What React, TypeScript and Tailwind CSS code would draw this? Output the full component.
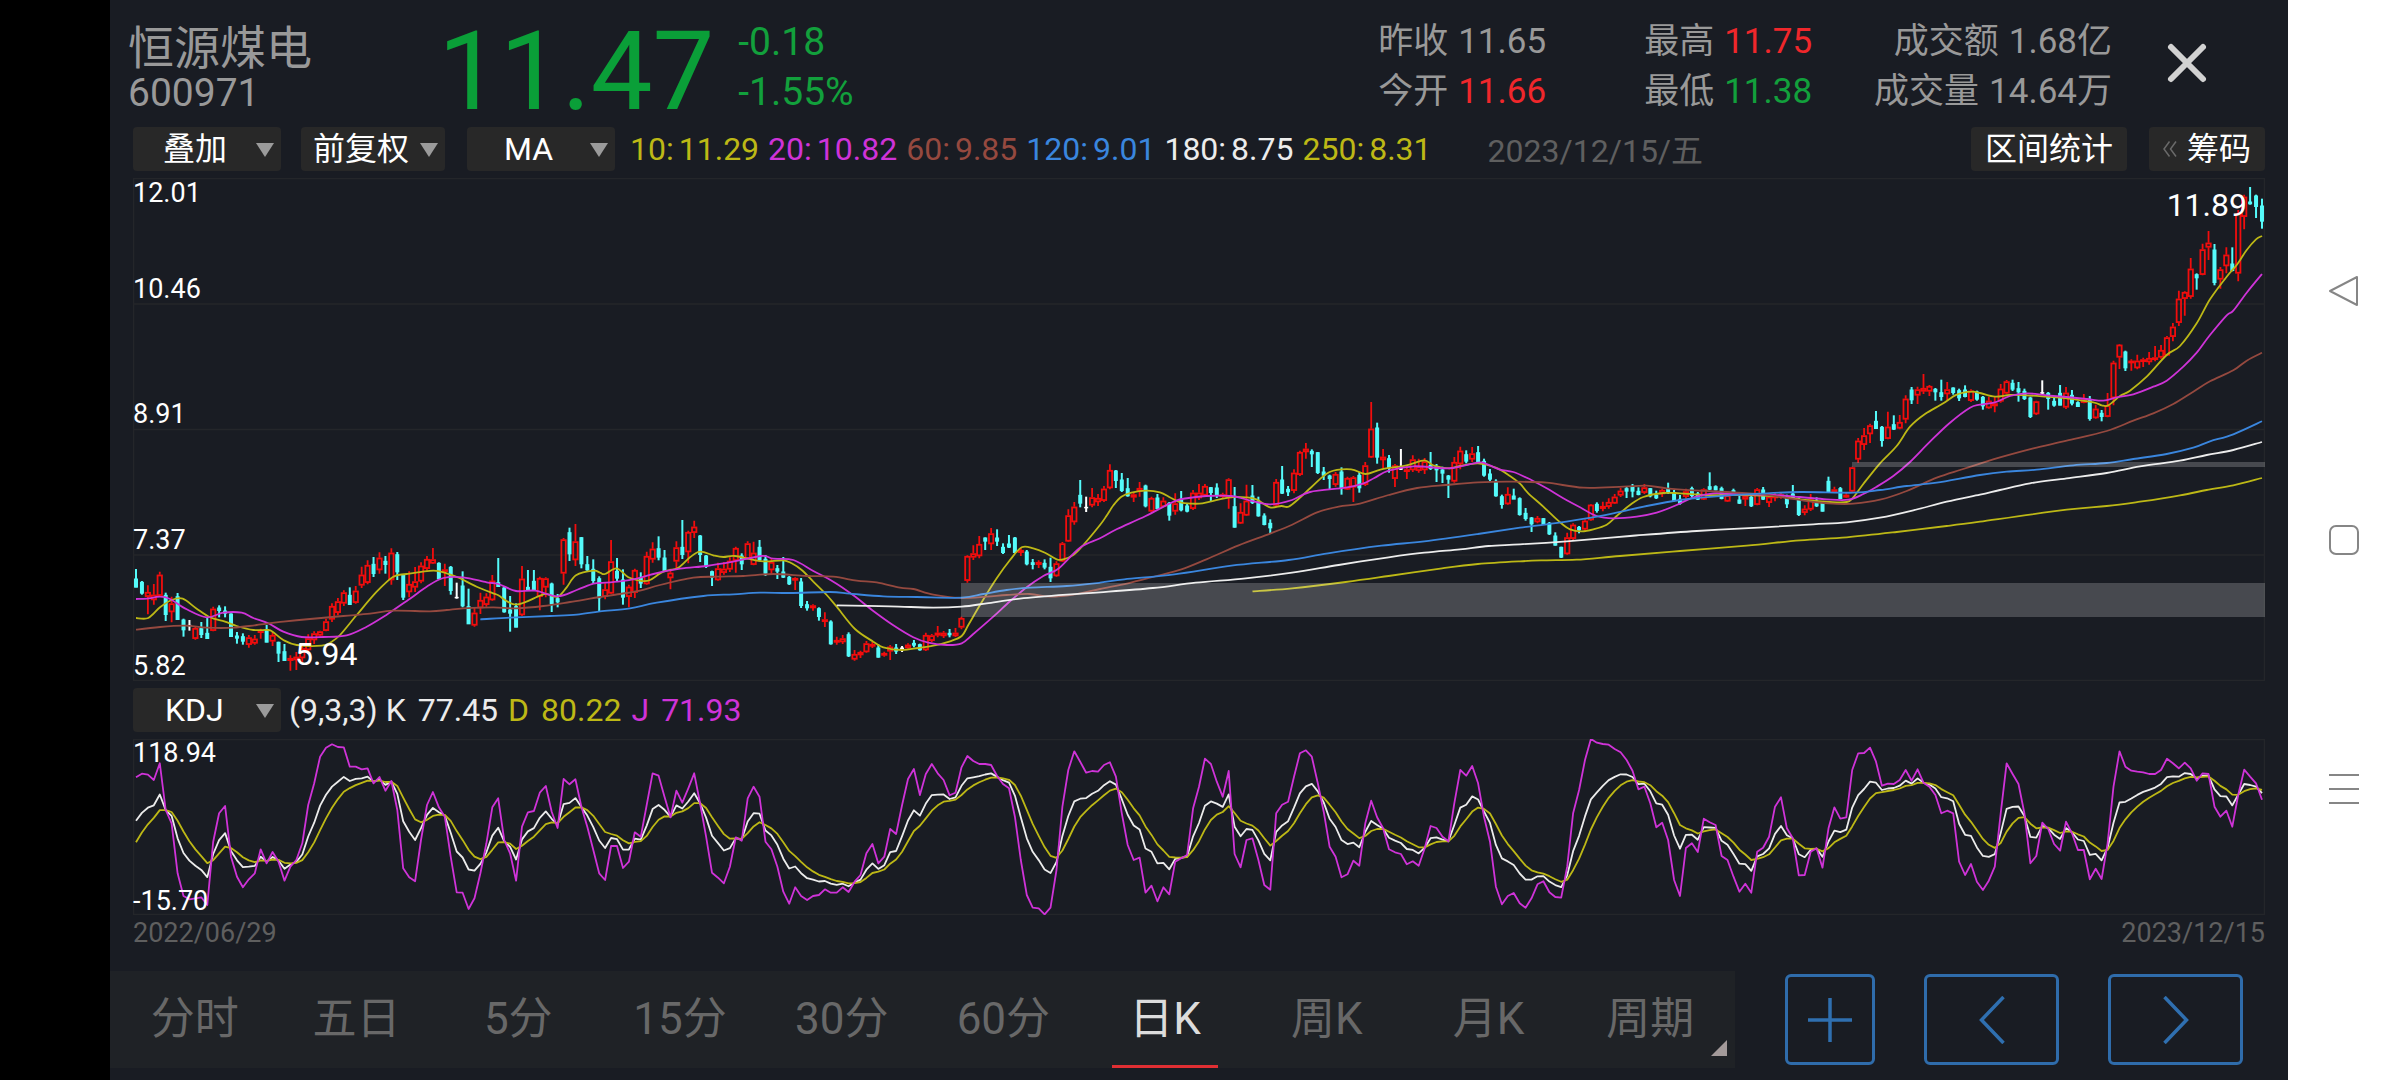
import { useState } from "react";
import clsx from "clsx";

type Ohlc = [high: number, open: number, close: number, low: number];
type Point = [number, number];

// The price history comes in slices. Each slice has its own origin in the plot
// and its own scale; heights grow downwards.
type Slice = {
  x: number;
  y: number;
  sx: number;
  candles: Ohlc[];
  lines: Record<string, Point[]>;
};

const WIDTH = 2132;
const PRICE_HEIGHT = 503;
const KDJ_HEIGHT = 176;
const STEP = 5.9385;

const slices: Slice[] = [
  {
    x: -23,
    y: 322,
    sx: 3,
    candles: [
      [207, 237, 260, 262], [243, 247, 278, 284], [256, 290, 276, 343], [252, 300, 284, 314], [215, 287, 224, 289],
      [278, 286, 342, 363], [290, 336, 310, 367], [279, 290, 357, 358], [356, 360, 388, 410], [360, 376, 376, 392],
      [380, 416, 384, 419], [366, 386, 402, 414], [352, 400, 414, 416], [320, 392, 326, 394], [316, 324, 330, 352],
      [319, 333, 338, 352], [340, 342, 408, 410], [396, 408, 413, 431], [400, 410, 422, 434], [405, 434, 412, 443],
      [405, 430, 416, 434], [386, 398, 391, 416], [375, 390, 425, 427], [396, 424, 405, 438], [425, 427, 458, 486],
      [432, 455, 480, 483], [466, 482, 474, 512], [456, 480, 470, 510], [430, 474, 445, 486], [403, 450, 415, 462],
      [394, 420, 400, 432], [392, 406, 394, 410], [356, 392, 364, 394], [310, 358, 318, 366], [294, 338, 304, 346],
      [271, 310, 277, 318], [262, 286, 312, 315], [258, 308, 272, 311], [200, 256, 224, 264], [181, 248, 195, 253],
      [171, 193, 219, 231], [157, 210, 173, 221], [168, 184, 192, 221], [145, 240, 158, 254], [156, 164, 214, 240],
      [222, 225, 290, 300], [214, 276, 252, 292], [201, 262, 244, 276], [187, 244, 197, 250], [168, 206, 177, 212],
      [144, 190, 178, 192], [187, 190, 235, 237], [191, 212, 208, 258], [198, 202, 270, 284], [248, 292, 292, 296],
      [214, 258, 316, 322], [266, 320, 370, 372], [324, 376, 338, 380], [278, 324, 300, 342], [280, 314, 290, 320],
      [225, 300, 242, 302], [174, 248, 258, 261], [258, 264, 334, 338], [288, 330, 338, 395], [310, 320, 380, 382],
      [198, 345, 236, 348], [210, 262, 268, 271], [210, 244, 270, 272], [230, 290, 234, 331], [232, 262, 235, 292],
      [248, 252, 310, 336], [282, 296, 304, 322], [114, 220, 118, 254], [83, 98, 160, 183], [72, 180, 124, 198],
      [111, 113, 190, 205], [168, 194, 208, 215], [178, 208, 240, 252], [229, 236, 292, 333],
    ],
    lines: {
      ma10: [
        [78, 354], [115, 354], [150, 322], [185, 300], [218, 296], [260, 326], [300, 352], [345, 365], [380, 378],
        [430, 390], [475, 390], [490, 397], [520, 420], [560, 435], [635, 437], [665, 425], [690, 405], [740, 345],
        [800, 275], [850, 230], [890, 222], [970, 212], [1010, 220], [1050, 235], [1100, 260], [1150, 280],
        [1165, 286], [1218, 314], [1290, 287], [1310, 282], [1343, 290], [1370, 262], [1398, 226], [1450, 212],
      ],
      ma20: [
        [78, 297], [110, 296], [150, 290], [180, 297], [230, 328], [290, 352], [340, 338], [395, 338], [430, 354],
        [475, 370], [520, 395], [575, 411], [640, 411], [710, 406], [770, 380], [830, 344], [900, 296], [950, 260],
        [1000, 234], [1060, 232], [1130, 247], [1165, 252], [1218, 273], [1275, 272], [1343, 289], [1400, 270],
        [1450, 251],
      ],
      ma60: [
        [78, 389], [150, 381], [225, 377], [290, 383], [370, 383], [440, 375], [520, 365], [600, 357], [700, 348],
        [780, 341], [850, 332], [960, 334], [1010, 330], [1060, 325], [1150, 322], [1220, 325], [1300, 318],
        [1380, 306], [1440, 296],
      ],
      ma120: [[1111, 358], [1200, 353], [1320, 348], [1400, 344]],
    },
  },
  {
    x: 467,
    y: 322,
    sx: 3,
    candles: [
      [250, 290, 268, 298], [120, 280, 184, 282], [174, 214, 233, 244], [208, 240, 290, 314], [254, 290, 260, 322],
      [206, 278, 210, 294], [217, 234, 248, 264], [155, 252, 168, 254], [127, 178, 146, 188], [109, 146, 170, 181],
      [150, 174, 210, 213], [206, 234, 218, 268], [124, 184, 142, 206], [60, 142, 162, 177], [92, 156, 96, 190],
      [62, 98, 80, 114], [105, 108, 162, 186], [165, 168, 198, 204], [212, 215, 230, 258], [188, 240, 205, 242],
      [186, 218, 206, 224], [172, 208, 182, 216], [140, 182, 144, 218], [160, 168, 190, 210], [124, 176, 130, 178],
      [125, 194, 158, 196], [120, 142, 178, 184], [165, 178, 218, 228], [176, 210, 186, 222], [195, 206, 212, 237],
      [171, 216, 230, 234], [228, 232, 250, 255], [232, 240, 234, 270], [234, 246, 315, 324], [303, 314, 322, 332],
      [313, 324, 316, 332], [322, 326, 348, 362], [337, 364, 358, 381], [361, 366, 430, 434], [410, 426, 420, 434],
      [405, 426, 415, 432], [397, 404, 466, 471], [450, 478, 462, 482], [452, 465, 456, 474], [423, 456, 430, 458],
      [426, 438, 432, 444], [433, 444, 470, 473], [455, 466, 459, 470], [435, 454, 440, 480], [432, 444, 452, 462],
      [438, 444, 444, 456], [430, 444, 434, 446], [420, 430, 434, 442], [431, 434, 448, 452], [398, 450, 405, 453],
      [402, 422, 406, 426], [378, 406, 398, 412], [393, 408, 398, 414], [387, 400, 403, 412], [384, 408, 398, 411],
      [350, 382, 354, 388], [166, 242, 168, 248], [136, 172, 160, 180], [108, 168, 132, 175], [112, 114, 122, 150],
      [84, 132, 100, 150], [88, 114, 122, 138], [130, 142, 156, 162], [105, 132, 140, 144], [111, 114, 156, 160],
      [144, 158, 150, 168], [150, 156, 190, 196], [177, 188, 192, 208], [181, 194, 186, 204], [178, 190, 200, 208],
      [173, 202, 232, 246], [184, 228, 190, 230], [126, 184, 130, 186], [28, 124, 46, 126],
    ],
    lines: {
      ma10: [
        [0, 218], [15, 222], [50, 205], [85, 232], [125, 243], [150, 240], [190, 215], [235, 203], [270, 172],
        [300, 155], [340, 166], [370, 171], [405, 168], [470, 182], [500, 184], [550, 181], [575, 190], [605, 210],
        [640, 245], [680, 285], [710, 320], [765, 387], [820, 425], [850, 442], [905, 450], [955, 444], [1000, 437],
        [1050, 424], [1085, 408], [1105, 375], [1140, 315], [1190, 235], [1230, 180], [1265, 142], [1300, 145],
        [1335, 158], [1370, 178], [1390, 178], [1420, 165], [1450, 135], [1500, 75],
      ],
      ma20: [
        [0, 249], [60, 244], [110, 236], [160, 222], [240, 206], [320, 198], [400, 185], [485, 168], [520, 176],
        [580, 180], [640, 213], [700, 245], [760, 286], [820, 333], [880, 376], [940, 412], [985, 428], [1040, 435],
        [1085, 430], [1120, 402], [1180, 350], [1230, 304], [1280, 262], [1330, 228], [1375, 206], [1440, 143],
        [1500, 115],
      ],
      ma60: [
        [0, 291], [60, 282], [120, 272], [180, 255], [280, 233], [350, 230], [430, 228], [520, 222], [620, 228],
        [700, 230], [770, 242], [830, 247], [900, 263], [940, 267], [1000, 284], [1080, 294], [1160, 290],
        [1220, 285], [1290, 282], [1350, 290], [1420, 284], [1500, 267],
      ],
      ma120: [
        [0, 334], [90, 325], [170, 308], [310, 288], [400, 283], [480, 278], [570, 279], [690, 276], [750, 281],
        [850, 289], [950, 291], [1085, 293], [1150, 282], [1220, 270], [1290, 263], [1400, 258], [1500, 248],
      ],
      ma180: [
        [710, 316], [870, 319], [1000, 323], [1085, 320], [1160, 310], [1260, 296], [1400, 284], [1500, 277],
      ],
    },
  },
  {
    x: 827,
    y: 212,
    sx: 2.8,
    candles: [
      [336, 396, 350, 404], [270, 316, 338, 352], [320, 352, 352, 366], [294, 346, 322, 352], [312, 336, 324, 348],
      [288, 332, 296, 336], [223, 294, 240, 298], [240, 243, 270, 294], [249, 270, 300, 306], [264, 296, 316, 320],
      [308, 322, 313, 336], [276, 304, 294, 320], [284, 288, 346, 352], [320, 364, 324, 368], [312, 324, 354, 358],
      [322, 350, 332, 352], [336, 340, 374, 392], [310, 364, 340, 374], [303, 330, 358, 364], [340, 348, 362, 367],
      [300, 356, 308, 360], [282, 324, 308, 330], [282, 316, 288, 320], [291, 293, 306, 334], [280, 294, 314, 324],
      [308, 320, 313, 326], [265, 324, 268, 356], [291, 350, 410, 413], [340, 400, 366, 402], [284, 376, 332, 378],
      [285, 318, 336, 342], [320, 336, 376, 380], [370, 378, 402, 406], [388, 400, 412, 430], [267, 346, 276, 350],
      [228, 270, 308, 312], [288, 298, 304, 318], [238, 302, 248, 310], [182, 254, 186, 258], [159, 186, 176, 206],
      [178, 184, 190, 231], [186, 188, 246, 252], [231, 246, 254, 270], [254, 258, 264, 300], [246, 284, 252, 290],
      [232, 246, 292, 314], [260, 298, 264, 300], [258, 292, 262, 336], [246, 256, 292, 308], [216, 284, 226, 288],
      [36, 202, 116, 204], [98, 114, 200, 221], [177, 210, 200, 234], [195, 206, 232, 248], [222, 266, 226, 291],
      [177, 236, 236, 240], [226, 244, 238, 267], [196, 240, 208, 246], [206, 242, 230, 248], [204, 240, 214, 252],
      [186, 226, 234, 240], [222, 230, 238, 276], [230, 240, 248, 279], [255, 258, 266, 324], [201, 274, 216, 278],
      [170, 222, 182, 238], [181, 194, 212, 220], [171, 208, 190, 216], [168, 188, 214, 218], [206, 214, 254, 260],
      [237, 252, 266, 273], [268, 274, 316, 320], [314, 320, 342, 356], [292, 342, 312, 344], [296, 318, 326, 326],
    ],
    lines: {
      ma10: [
        [410, 378], [430, 345], [452, 320], [480, 308], [520, 302], [560, 307], [590, 323], [620, 338], [670, 341],
        [700, 335], [755, 322], [800, 322], [830, 328], [868, 352], [900, 348], [920, 350], [950, 325], [985, 290],
        [1035, 246], [1095, 238], [1135, 252], [1180, 238], [1250, 226], [1300, 211], [1325, 226], [1370, 235],
        [1400, 228], [1450, 220], [1500, 233], [1540, 258],
      ],
      ma20: [
        [440, 417], [520, 378], [600, 334], [640, 324], [690, 318], [760, 318], [810, 331], [868, 343], [930, 330],
        [980, 306], [1080, 293], [1130, 280], [1160, 264], [1200, 242], [1270, 229], [1340, 234], [1380, 234],
        [1450, 218], [1470, 220], [1510, 238],
      ],
      ma60: [
        [470, 580], [550, 558], [620, 538], [690, 508], [780, 466], [870, 430], [930, 404], [1000, 367],
        [1060, 350], [1120, 341], [1200, 315], [1280, 294], [1360, 285], [1450, 277],
      ],
      ma120: [
        [460, 568], [600, 553], [760, 527], [920, 510], [1030, 490], [1180, 467], [1300, 454], [1450, 432],
      ],
      ma180: [
        [540, 594], [660, 578], [800, 565], [930, 548], [1060, 525], [1200, 502], [1300, 488], [1400, 478],
        [1480, 468],
      ],
      ma250: [[819, 604], [930, 595], [1080, 576], [1200, 558], [1350, 535], [1450, 522]],
    },
  },
  {
    x: 1347,
    y: 182,
    sx: 3,
    candles: [
      [412, 416, 462, 467], [444, 460, 474, 482], [471, 474, 490, 516], [468, 486, 474, 490], [474, 476, 492, 495],
      [486, 490, 520, 525], [517, 528, 554, 557], [560, 562, 590, 594], [518, 582, 532, 584], [490, 536, 494, 541],
      [498, 502, 508, 520], [478, 508, 482, 512], [432, 480, 434, 482], [427, 433, 450, 458], [425, 446, 438, 454],
      [415, 440, 426, 446], [402, 430, 410, 432], [384, 406, 392, 411], [380, 386, 392, 414], [372, 380, 392, 412],
      [382, 394, 402, 406], [372, 398, 382, 402], [384, 386, 406, 412], [392, 406, 412, 417], [386, 402, 390, 411],
      [368, 388, 396, 402], [390, 398, 420, 424], [405, 418, 428, 434], [386, 410, 394, 416], [380, 386, 405, 412],
      [396, 402, 416, 420], [385, 418, 388, 420], [337, 380, 386, 390], [376, 380, 388, 391], [380, 386, 414, 418],
      [402, 424, 406, 426], [386, 392, 398, 402], [404, 420, 428, 432], [402, 418, 408, 438], [404, 412, 436, 441],
      [384, 434, 388, 436], [381, 390, 416, 420], [402, 428, 410, 441], [398, 414, 406, 424], [399, 408, 403, 416],
      [404, 412, 430, 444], [375, 402, 412, 414], [412, 418, 462, 468], [436, 458, 446, 466], [402, 448, 418, 453],
      [412, 428, 436, 441], [426, 430, 452, 455], [350, 364, 394, 399], [380, 396, 388, 399], [381, 386, 414, 418],
      [398, 412, 404, 414], [320, 394, 322, 396], [234, 298, 242, 308], [204, 254, 226, 270], [191, 222, 196, 249],
      [153, 184, 204, 206], [198, 202, 240, 260], [155, 236, 200, 238], [166, 194, 206, 210], [165, 205, 186, 208],
      [106, 178, 116, 190], [81, 90, 118, 132], [80, 106, 88, 132], [42, 94, 84, 102], [75, 94, 78, 108],
      [84, 88, 94, 122], [59, 98, 108, 122], [66, 102, 88, 120], [82, 84, 96, 104], [86, 92, 112, 123],
      [76, 90, 108, 112], [88, 122, 92, 126],
    ],
    lines: {
      ma10: [
        [120, 371], [145, 400], [190, 440], [240, 487], [270, 508], [305, 514], [340, 508], [380, 494], [410, 468],
        [450, 435], [490, 411], [550, 399], [600, 400], [680, 405], [760, 405], [880, 408], [960, 418], [1050, 426],
        [1100, 426], [1120, 412], [1150, 372], [1200, 310], [1250, 258], [1290, 200], [1335, 162], [1390, 130],
        [1430, 104], [1475, 95],
      ],
      ma20: [
        [100, 336], [150, 358], [200, 385], [250, 415], [300, 442], [350, 468], [400, 475], [470, 470], [530, 458],
        [590, 435], [640, 412], [700, 400], [760, 402], [880, 405], [960, 411], [1040, 418], [1105, 419],
        [1150, 402], [1190, 380], [1240, 348], [1290, 306], [1350, 245], [1410, 188], [1470, 143],
      ],
      ma60: [
        [100, 365], [200, 368], [310, 383], [430, 380], [500, 377], [560, 385], [640, 391], [740, 396], [850, 403],
        [920, 414], [1000, 426], [1060, 431], [1120, 431], [1200, 419], [1280, 393], [1370, 353], [1440, 330],
      ],
      ma120: [
        [120, 503], [200, 493], [300, 478], [400, 460], [500, 438], [600, 420], [700, 410], [840, 401], [960, 396],
        [1120, 398], [1200, 390], [1280, 378], [1370, 368],
      ],
      ma180: [
        [120, 553], [260, 544], [450, 528], [650, 513], [850, 502], [1000, 493], [1100, 487], [1200, 473],
        [1300, 451], [1400, 425],
      ],
      ma250: [
        [120, 604], [200, 601], [290, 599], [420, 588], [600, 573], [800, 557], [960, 541], [1100, 532],
        [1250, 516], [1400, 498],
      ],
    },
  },
  {
    x: 1767,
    y: -8,
    sx: 3,
    candles: [
      [662, 666, 686, 692], [678, 682, 706, 719], [680, 714, 692, 716], [680, 708, 700, 727], [642, 694, 656, 698],
      [630, 670, 634, 672], [629, 640, 656, 663], [636, 656, 664, 695], [656, 664, 684, 690], [680, 684, 738, 744],
      [692, 732, 694, 735], [631, 668, 668, 672], [666, 670, 684, 719], [683, 694, 704, 710], [645, 670, 704, 706],
      [651, 712, 668, 717], [660, 676, 698, 706], [694, 698, 708, 711], [672, 698, 688, 700], [678, 690, 744, 752],
      [704, 744, 716, 746], [720, 730, 738, 754], [669, 740, 706, 742], [572, 684, 578, 706], [522, 562, 524, 597],
      [542, 546, 592, 603], [568, 576, 572, 602], [554, 594, 572, 598], [563, 574, 568, 591], [546, 576, 564, 584],
      [528, 566, 562, 574], [525, 562, 540, 566], [498, 556, 502, 558], [459, 500, 470, 514], [362, 458, 386, 468],
      [364, 386, 366, 437], [264, 380, 296, 386], [310, 314, 322, 359], [221, 314, 238, 316], [183, 232, 218, 270],
      [222, 240, 336, 346], [291, 328, 298, 356], [232, 288, 254, 310], [232, 282, 300, 304], [120, 310, 130, 334],
      [74, 140, 80, 178], [51, 96, 100, 104], [74, 78, 108, 144], [86, 108, 152, 176],
    ],
    lines: {
      ma10: [
        [240, 669], [285, 680], [330, 675], [380, 676], [440, 680], [500, 685], [580, 697], [605, 706], [625, 706],
        [660, 678], [690, 662], [740, 620], [800, 555], [840, 528], [890, 460], [930, 388], [980, 320],
        [1010, 285], [1040, 240], [1068, 208], [1086, 198],
      ],
      ma20: [
        [240, 704], [285, 697], [330, 678], [380, 670], [440, 676], [500, 681], [560, 687], [610, 692], [650, 682],
        [700, 673], [760, 650], [800, 632], [850, 590], [890, 548], [930, 495], [980, 436], [1000, 422],
        [1040, 368], [1086, 312],
      ],
      ma60: [
        [240, 881], [300, 862], [400, 835], [500, 812], [620, 783], [700, 752], [760, 730], [820, 702], [880, 665],
        [930, 634], [1000, 601], [1040, 572], [1086, 548],
      ],
      ma120: [
        [240, 915], [320, 905], [410, 899], [520, 886], [620, 879], [700, 867], [800, 852], [880, 833], [930, 814],
        [1000, 793], [1086, 754],
      ],
      ma180: [
        [240, 974], [300, 960], [390, 940], [500, 925], [620, 909], [720, 889], [840, 872], [920, 855],
        [1000, 840], [1086, 816],
      ],
      ma250: [
        [240, 1055], [500, 1019], [620, 1008], [720, 995], [840, 976], [920, 960], [1000, 946], [1086, 924],
      ],
    },
  },
];

// J of the KDJ indicator, one sample a day; 177 is the top of the plot, 706 the bottom
const jSamples = [
  292, 281, 284, 300, 250, 390, 430, 580, 648, 658, 655, 652, 675, 485, 400, 378, 530, 590, 622, 598, 580, 508, 550,
  516, 545, 602, 560, 540, 490, 375, 310, 230, 203, 193, 201, 202, 260, 260, 268, 265, 310, 291, 332, 303, 390, 565,
  592, 604, 480, 375, 336, 382, 410, 530, 637, 638, 687, 655, 580, 490, 382, 355, 480, 520, 602, 440, 397, 393, 338,
  318, 395, 444, 297, 313, 298, 380, 440, 510, 580, 600, 498, 498, 564, 545, 457, 470, 375, 280, 287, 350, 412, 332,
  368, 325, 280, 372, 470, 578, 593, 610, 560, 472, 482, 355, 320, 350, 485, 508, 560, 635, 671, 622, 648, 660, 648,
  645, 628, 638, 638, 622, 636, 605, 585, 520, 492, 550, 530, 447, 462, 375, 297, 267, 345, 282, 252, 280, 300, 346,
  338, 262, 228, 243, 252, 252, 255, 288, 312, 325, 410, 540, 645, 683, 685, 703, 683, 570, 380, 270, 214, 245, 278,
  273, 275, 255, 247, 290, 400, 495, 540, 533, 638, 617, 664, 622, 643, 545, 535, 525, 385, 320, 236, 252, 305, 350,
  273, 522, 562, 480, 475, 540, 615, 629, 400, 374, 365, 290, 220, 211, 230, 310, 395, 500, 530, 592, 583, 542, 557,
  430, 362, 412, 445, 508, 517, 522, 553, 544, 557, 505, 438, 444, 470, 484, 370, 270, 287, 258, 310, 410, 485, 620,
  673, 648, 639, 670, 683, 655, 613, 604, 637, 651, 653, 560, 400, 330, 240, 177, 188, 192, 194, 207, 217, 240, 272,
  328, 320, 370, 442, 428, 480, 600, 648, 504, 490, 516, 416, 427, 435, 528, 540, 590, 635, 611, 638, 515, 503, 470,
  380, 352, 445, 475, 586, 585, 515, 505, 563, 445, 382, 416, 412, 270, 220, 219, 203, 245, 317, 311, 312, 300, 270,
  302, 268, 308, 320, 345, 400, 392, 400, 545, 585, 552, 605, 630, 602, 560, 400, 250, 282, 312, 400, 550, 528, 428,
  447, 492, 512, 425, 460, 510, 510, 598, 566, 597, 490, 320, 214, 260, 272, 275, 277, 282, 282, 270, 236, 250, 265,
  248, 265, 302, 280, 282, 380, 410, 392, 440, 345, 269, 290, 310, 359,
];

const movingAverages = [
  { id: "ma10", days: 10, value: "11.29", text: "text-[#bdb816]" },
  { id: "ma20", days: 20, value: "10.82", text: "text-[#cf33d8]" },
  { id: "ma60", days: 60, value: "9.85", text: "text-[#95493f]" },
  { id: "ma120", days: 120, value: "9.01", text: "text-[#3a86de]" },
  { id: "ma180", days: 180, value: "8.75", text: "text-[#ececec]" },
  { id: "ma250", days: 250, value: "8.31", text: "text-[#bdb816]" },
];

const quotes = [
  {
    className: "mr-[98px]",
    rows: [
      { label: "昨收", value: "11.65", color: "" },
      { label: "今开", value: "11.66", color: "text-[#f0272b]" },
    ],
  },
  {
    className: "mr-[62px]",
    rows: [
      { label: "最高", value: "11.75", color: "text-[#f0272b]" },
      { label: "最低", value: "11.38", color: "text-[#12a03c]" },
    ],
  },
  {
    className: "",
    rows: [
      { label: "成交额", value: "1.68亿", color: "" },
      { label: "成交量", value: "14.64万", color: "" },
    ],
  },
];

const periods = ["分时", "五日", "5分", "15分", "30分", "60分", "日K", "周K", "月K", "周期"];

const dayX = (i: number) => 3 + i * STEP;

const round = (n: number) => Math.round(n * 10) / 10;

const candles = slices
  .flatMap((s) => s.candles.map((c) => c.map((v) => s.y + v / 3) as Ohlc))
  .map(([high, open, close, low], i) => ({ x: dayX(i), high, open, close, low }));

const linePoints = (id: string): Point[] =>
  slices.flatMap((s) => (s.lines[id] ?? []).map(([x, y]) => [s.x + x / s.sx, s.y + y / 3] as Point));

// Catmull-Rom through the points, written as cubic beziers
const smoothPath = (p: Point[]) =>
  p.reduce((d, [x, y], i) => {
    if (i === 0) return `M${round(x)} ${round(y)}`;
    const [ax, ay] = p[i - 1];
    const [bx, by] = p[i - 2] ?? p[i - 1];
    const [cx, cy] = p[i + 1] ?? p[i];
    return `${d}C${round(ax + (x - bx) / 6)} ${round(ay + (y - by) / 6)} ${round(x - (cx - ax) / 6)} ${round(
      y - (cy - ay) / 6
    )} ${round(x)} ${round(y)}`;
  }, "");

// K and D follow from J: J = 3K - 2D, and D is the smoothed K
const buildKdj = () => {
  const k = [422];
  const d = [487];
  for (let i = 1; i < jSamples.length; i++) {
    k.push((3 * jSamples[i] + 4 * d[i - 1]) / 7);
    d.push((2 * d[i - 1] + k[i]) / 3);
  }
  const points = (values: number[]) => values.map((v, i) => `${round(dayX(i))},${round((v - 177) / 3)}`).join(" ");
  return { k: points(k), d: points(d), j: points(jSamples) };
};

const kdj = buildKdj();

const Picker = ({ label, options, className }: { label: string; options: string[]; className: string }) => {
  return (
    <div className="relative">
      <select
        aria-label={label}
        className={clsx("block h-11 appearance-none rounded bg-[#282828] text-[32px] leading-[44px] text-white", className)}
      >
        {options.map((o) => (
          <option key={o}>{o}</option>
        ))}
      </select>
      <svg viewBox="0 0 18 14" className="pointer-events-none absolute top-4 right-[7px] h-3.5 w-[18px] fill-[#9b9b9b]">
        <path d="M0 0h18L9 14z" />
      </svg>
    </div>
  );
};

const Candles = () => {
  return (
    <g>
      {candles.map(({ x, high, open, close, low }, i) => {
        const top = Math.min(open, close);
        const bottom = Math.max(open, close);
        if (close < open) {
          return (
            <g key={i} fill="none" stroke="#f20d0d" strokeWidth={1.8}>
              <path d={`M${x} ${high}V${top}M${x} ${bottom}V${low}`} />
              <rect x={x - 2.2} y={top + 0.8} width={4.4} height={Math.max(bottom - top - 1.4, 1)} />
            </g>
          );
        }
        const color = close === open ? "#ffffff" : "#55fbfb";
        return (
          <g key={i} fill={color}>
            <rect x={x - 1} y={high} width={2} height={low - high} />
            <rect x={x - 2} y={top - 0.5} width={4} height={bottom - top + 1.5} />
          </g>
        );
      })}
    </g>
  );
};

const PriceChart = () => {
  return (
    <div className="relative mt-[7px]">
      <svg viewBox={`0 0 ${WIDTH} ${PRICE_HEIGHT}`} preserveAspectRatio="none" className="block h-[503px] w-full">
        <g stroke="#24262a" strokeWidth={1.5} fill="none">
          <rect x={0.5} y={0.5} width={WIDTH - 1} height={PRICE_HEIGHT - 1} />
          <path d={`M0 126H${WIDTH}M0 251.5H${WIDTH}M0 377H${WIDTH}`} />
        </g>
        <Candles />
        {movingAverages.map((m) => (
          <path
            key={m.id}
            d={smoothPath(linePoints(m.id))}
            fill="none"
            stroke="currentColor"
            strokeWidth={1.8}
            className={m.text}
          />
        ))}
        <g fill="#ffffff" fillOpacity={0.2}>
          <rect x={828} y={405} width={WIDTH - 828} height={34} />
          <rect x={1719} y={284} width={WIDTH - 1719} height={5} />
        </g>
      </svg>
      <div className="absolute inset-0 grid grid-rows-[30px_96px_125px_126px_126px] items-end text-[27px] leading-[30px] text-white">
        <span>12.01</span>
        <span>10.46</span>
        <span>8.91</span>
        <span>7.37</span>
        <span>5.82</span>
      </div>
      <span className="absolute top-[7px] right-[18px] text-[32px] leading-[40px] text-white">11.89</span>
      <span className="absolute bottom-[7px] left-[162px] text-[32px] leading-[40px] text-white">5.94</span>
    </div>
  );
};

const KdjChart = () => {
  return (
    <div className="relative mt-[7px]">
      <svg viewBox={`0 0 ${WIDTH} ${KDJ_HEIGHT}`} preserveAspectRatio="none" className="block h-[176px] w-full">
        <rect x={0.5} y={0.5} width={WIDTH - 1} height={KDJ_HEIGHT - 1} fill="none" stroke="#24262a" strokeWidth={1.5} />
        <g fill="none" strokeWidth={1.8} strokeLinejoin="round">
          <polyline points={kdj.k} stroke="#ececec" />
          <polyline points={kdj.d} stroke="#bdb816" />
          <polyline points={kdj.j} stroke="#cf33d8" />
        </g>
      </svg>
      <div className="absolute inset-0 flex flex-col justify-between text-[27px] leading-[28px] text-white">
        <span>118.94</span>
        <span>-15.70</span>
      </div>
    </div>
  );
};

const Header = () => {
  return (
    <header className="flex items-start pt-[17px] pl-[18px] text-[#999999]">
      <div className="w-[310px] pt-2">
        <h1 className="text-[46px] leading-[46px]">恒源煤电</h1>
        <p className="text-[39px] leading-[44px]">600971</p>
      </div>
      <p className="text-[110px] leading-[110px] text-[#0a9f38]">11.47</p>
      <div className="ml-6 text-[39px] leading-[50px] text-[#12a03c]">
        <p>-0.18</p>
        <p>-1.55%</p>
      </div>
      <div className="ml-auto flex text-right text-[35px] leading-[50px]">
        {quotes.map((q, i) => (
          <dl key={i} className={q.className}>
            {q.rows.map((r) => (
              <div key={r.label} className="flex justify-end gap-2.5">
                <dt>{r.label}</dt>
                <dd className={r.color}>{r.value}</dd>
              </div>
            ))}
          </dl>
        ))}
      </div>
      <button type="button" aria-label="关闭" className="mt-[15px] mr-[70px] ml-11 p-2.5">
        <svg viewBox="0 0 42 42" className="size-[42px] stroke-[#d2d2d2]" strokeWidth={6} strokeLinecap="round">
          <path d="M5 5l32 32M37 5L5 37" />
        </svg>
      </button>
    </header>
  );
};

const Toolbar = () => {
  return (
    <div className="flex items-center text-[32px] leading-[44px]">
      <Picker label="叠加" options={["叠加"]} className="w-[148px] pl-[30px]" />
      <div className="ml-5">
        <Picker label="复权" options={["前复权", "后复权", "不复权"]} className="w-36 pl-3" />
      </div>
      <div className="ml-[22px]">
        <Picker label="主图指标" options={["MA", "BOLL"]} className="w-[148px] pl-[37px]" />
      </div>
      <div className="ml-[15px] flex gap-[9px] whitespace-nowrap">
        {movingAverages.map((m) => (
          <span key={m.id} className={clsx("flex gap-[5px]", m.text)}>
            <span>{m.days}:</span>
            <span>{m.value}</span>
          </span>
        ))}
      </div>
      <time dateTime="2023-12-15" className="ml-14 pt-1 leading-[40px] text-[#5f5f5f]">
        2023/12/15/五
      </time>
      <button type="button" className="ml-auto h-11 w-[156px] rounded bg-[#282828] text-white">
        区间统计
      </button>
      <button
        type="button"
        className="ml-[22px] flex h-11 w-[116px] items-center justify-end gap-2.5 rounded bg-[#282828] pr-3.5 text-white"
      >
        <svg viewBox="0 0 14 16" className="h-4 w-3.5 fill-none stroke-[#6a6a6a]" strokeWidth={1.5}>
          <path d="M6.500 .5L1 8l5.500 7.500M13 .5L7.500 8l5.500 7.500" />
        </svg>
        筹码
      </button>
    </div>
  );
};

const PeriodBar = () => {
  const [active, setActive] = useState("日K");

  return (
    <div className="mt-5 flex items-center pr-[45px] pb-3">
      <nav className="flex flex-1 bg-[#1f2226] px-1">
        {periods.map((p) => (
          <button
            type="button"
            key={p}
            onClick={() => setActive(p)}
            className={clsx(
              "relative h-[97px] flex-1 text-[44px] leading-[97px]",
              p === active ? "text-[#dcdcdc]" : "text-[#686868]"
            )}
          >
            {p}
            {p === active && <span className="absolute inset-x-7 bottom-0 h-[3px] bg-[#e02f33]" />}
            {p === "周期" && (
              <svg viewBox="0 0 16 16" className="absolute right-1 bottom-3 size-4 fill-[#a39a9a]">
                <path d="M16 0v16H0z" />
              </svg>
            )}
          </button>
        ))}
      </nav>
      <div className="ml-[50px] flex gap-[49px] fill-none stroke-[#2f6fb0]">
        <button
          type="button"
          aria-label="放大"
          className="flex h-[91px] w-[90px] items-center justify-center rounded-md border-3 border-[#2f6cab]"
        >
          <svg viewBox="0 0 44 44" className="size-11" strokeWidth={3.5}>
            <path d="M22 0v44M0 22h44" />
          </svg>
        </button>
        <button
          type="button"
          aria-label="向前"
          className="flex h-[91px] w-[135px] items-center justify-center rounded-md border-3 border-[#2f6cab]"
        >
          <svg viewBox="0 0 26 48" className="h-12 w-[26px]" strokeWidth={3.5}>
            <path d="M24.500 1L2.500 24l22 23" />
          </svg>
        </button>
        <button
          type="button"
          aria-label="向后"
          className="flex h-[91px] w-[135px] items-center justify-center rounded-md border-3 border-[#2f6cab]"
        >
          <svg viewBox="0 0 26 48" className="h-12 w-[26px]" strokeWidth={3.5}>
            <path d="M1.500 1l22 23l-22 23" />
          </svg>
        </button>
      </div>
    </div>
  );
};

const SystemBar = () => {
  return (
    <aside className="flex w-28 shrink-0 flex-col items-center justify-center gap-[217px] bg-white">
      <button type="button" aria-label="返回">
        <svg viewBox="0 0 32 32" className="size-8 fill-none stroke-[#868686]" strokeWidth={2} strokeLinejoin="round">
          <path d="M2 16L29 2v28z" />
        </svg>
      </button>
      <button type="button" aria-label="主屏幕">
        <svg viewBox="0 0 32 32" className="size-8 fill-none stroke-[#868686]" strokeWidth={2}>
          <rect x="2" y="2" width="28" height="28" rx="6" />
        </svg>
      </button>
      <button type="button" aria-label="最近任务">
        <svg viewBox="0 0 32 32" className="size-8 fill-none stroke-[#868686]" strokeWidth={2}>
          <path d="M1 2h30M1 16h30M1 30h30" />
        </svg>
      </button>
    </aside>
  );
};

const App = () => {
  return (
    <div className="flex min-h-screen bg-black pl-[110px] font-[Roboto,'Noto_Sans_CJK_SC',sans-serif]">
      <main className="min-w-0 flex-1 bg-[#191c23]">
        <Header />
        <div className="px-[23px]">
          <Toolbar />
          <PriceChart />
          <div className="mt-[7px] flex items-center text-[32px] leading-[44px] text-[#ececec]">
            <Picker label="副图指标" options={["KDJ", "MACD", "RSI"]} className="w-[148px] pl-8" />
            <span className="ml-2">(9,3,3)</span>
            <span className="ml-2">K</span>
            <span className="ml-3">77.45</span>
            <span className="ml-2.5 text-[#bdb816]">D</span>
            <span className="ml-3 text-[#bdb816]">80.22</span>
            <span className="ml-2.5 text-[#cf33d8]">J</span>
            <span className="ml-3 text-[#cf33d8]">71.93</span>
          </div>
          <KdjChart />
          <div className="flex justify-between text-[27px] leading-[36px] text-[#5f5f5f]">
            <time dateTime="2022-06-29">2022/06/29</time>
            <time dateTime="2023-12-15">2023/12/15</time>
          </div>
        </div>
        <PeriodBar />
      </main>
      <SystemBar />
    </div>
  );
};

export default App;
